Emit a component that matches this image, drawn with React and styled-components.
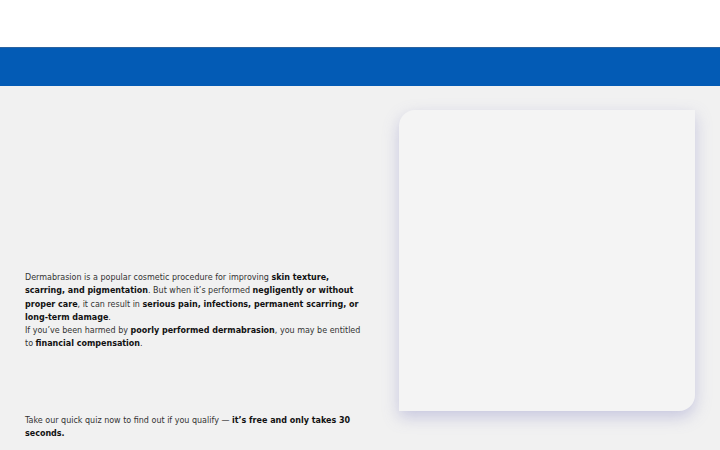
import React from "react";
import styled, { createGlobalStyle } from "styled-components";

const Global = createGlobalStyle`
  html, body { margin: 0; padding: 0; background: #f1f1f1; }
  body { font-family: "DejaVu Sans", "Liberation Sans", sans-serif; color: #111; }
`;

const Page = styled.div`
  width: 720px;
  height: 450px;
  overflow: hidden;
  display: flex;
  flex-direction: column;
`;

const TopBar = styled.header`
  height: 47px;
  background: #ffffff;
  flex-shrink: 0;
`;

const Band = styled.div`
  height: 39px;
  background: #035bb5;
  border-top: 1px solid #2b63a0;
  box-sizing: border-box;
  flex-shrink: 0;
`;

const Main = styled.main`
  display: flex;
  align-items: flex-start;
  padding: 0 25px;
  gap: 34px;
`;

const TextColumn = styled.section`
  width: 340px;
  flex-shrink: 0;
  padding-top: 185px;
  display: flex;
  flex-direction: column;
  gap: 63px;
`;

const Para = styled.p`
  margin: 0;
  font-size: 8px;
  line-height: 13.3px;
  color: #333;
  b { font-weight: 700; color: #111; }
`;

const Card = styled.div`
  margin-top: 24px;
  width: 296px;
  height: 301px;
  background: #f4f4f4;
  border-radius: 16px 0 16px 0;
  box-shadow: 0 6px 16px rgba(120, 120, 190, 0.35);
`;

export default function App() {
  return (
    <Page>
      <Global />
      <TopBar />
      <Band />
      <Main>
        <TextColumn>
          <Para>
            Dermabrasion is a popular cosmetic procedure for improving <b>skin texture, scarring, and pigmentation</b>. But when it’s performed <b>negligently or without proper care</b>, it can result in <b>serious pain, infections, permanent scarring, or long-term damage</b>.
            <br />
            If you’ve been harmed by <b>poorly performed dermabrasion</b>, you may be entitled to <b>financial compensation</b>.
          </Para>
          <Para>
            Take our quick quiz now to find out if you qualify — <b>it’s free and only takes 30 seconds.</b>
          </Para>
        </TextColumn>
        <Card />
      </Main>
    </Page>
  );
}
